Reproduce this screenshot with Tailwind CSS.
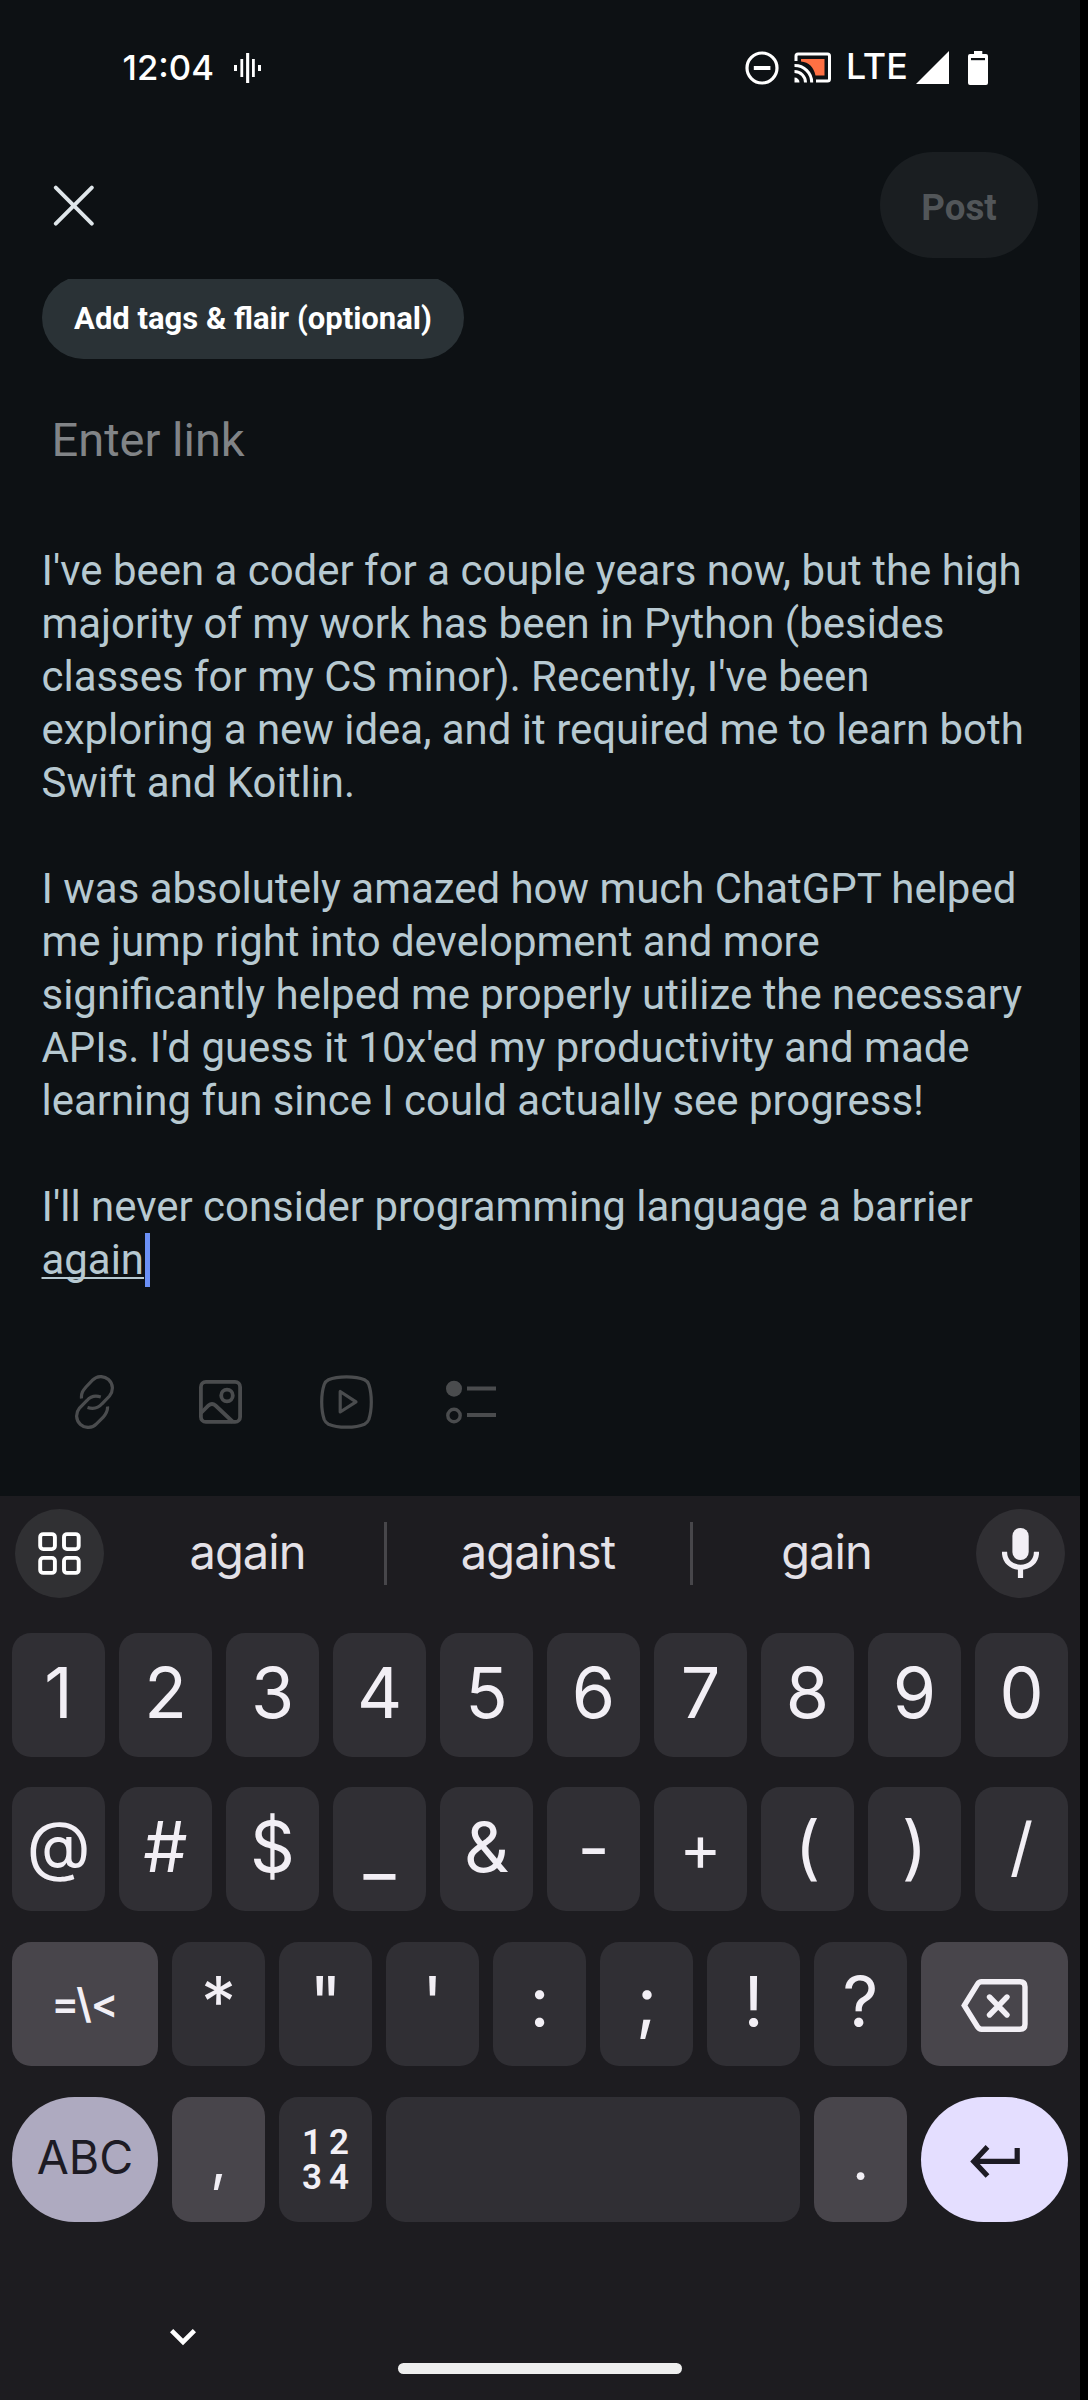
<!DOCTYPE html>
<html lang="en">
<head>
<meta charset="utf-8">
<title>Create post</title>
<script src="https://cdn.jsdelivr.net/npm/@tailwindcss/browser@4"></script>
</head>
<body class="bg-black">
<main class="flex h-[2400px] w-[1080px] flex-col bg-[#0d1114] font-[Roboto,sans-serif]">

  <!-- Composer -->
  <section class="flex h-[1496px] flex-col">
    <div class="flex h-[135px] shrink-0 items-center pl-[122.5px] pr-[92px] text-white">
      <span class="w-[111px] font-[Inter,sans-serif] text-[34.7px] font-medium">12:04</span>
      <svg class="h-[30px] w-[27px]" viewBox="0 0 27 30" fill="currentColor"><path d="M0 12h3v6H0zM6.4 6h2.8v18H6.4zM12.1 0h3.1v30h-3.1zM18 6h2.8v18H18zM24 12h3v6h-3z"/></svg>
      <svg class="ml-auto h-[34px] w-[34px]" viewBox="0 0 34 34" fill="none" stroke="currentColor"><circle cx="17" cy="17" r="15" stroke-width="3.2"/><path d="M8.8 17h16.6" stroke-width="4"/></svg>
      <svg class="ml-[15px] h-[31px] w-[38px]" viewBox="0 0 38 31" fill="none" stroke="currentColor" stroke-width="3"><path d="M7 7H30.5V23.5H21.5C19.5 14.5 15 10.5 7 9.5Z" fill="#ff7043" stroke="none"/><path d="M2 9V4Q2 2 4 2H33.5Q35.500 2 35.500 4V27Q35.500 29 33.500 29H22"/><path d="M.5 13.500A17 17 0 0 1 17.700 30.500M.5 19.500A11 11 0 0 1 11.500 30.500"/><path d="M.5 25.500a5 5 0 0 1 5 5h-5z" fill="currentColor" stroke="none"/></svg>
      <span class="ml-[14px] w-[60px] pb-[1.500px] font-[Inter,sans-serif] text-[35.800px] font-medium">LTE</span>
      <svg class="ml-[10px] h-[33px] w-[33px]" viewBox="0 0 33 33" fill="currentColor"><path d="M0 33 33 0V33z"/></svg>
      <svg class="ml-[19px] h-[34px] w-5" viewBox="0 0 20 34"><path d="M6 0h8.300v3H18q2 0 2 2v27q0 2-2 2H2q-2 0-2-2V5q0-2 2-2h4z" fill="currentColor"/><path d="M3 7h14v2.200H3z" fill="#0d1114"/></svg>
    </div>

    <header class="flex h-[140px] shrink-0 items-center justify-between pl-[53px] pr-[42px]">
      <svg class="h-[42px] w-[42px]" viewBox="0 0 42 42" fill="none" stroke="#dfe6ea" stroke-width="3.900" stroke-linecap="round"><path d="M2.800 3.600 38.800 39.600M38.800 3.600 2.800 39.600"/></svg>
      <button class="flex h-[106px] w-[158px] items-center justify-center rounded-full bg-[#1a1e21] pt-[5px] text-[36.7px] font-bold text-[#525659]">Post</button>
    </header>

    <div class="ml-[42px] mt-1 h-20 w-[422px] shrink-0 overflow-hidden">
      <button class="-mt-[3px] flex h-[83px] w-full items-center justify-center rounded-full bg-[#2a3236] pt-[4px] text-[31px] font-bold text-white">Add tags &amp; flair (optional)</button>
    </div>

    <div class="ml-[51.500px] mt-[51px] h-[60px] shrink-0 text-[47px] leading-[60px] text-[#818487]">Enter link</div>

    <div class="ml-[41.500px] mt-[73.500px] shrink-0 whitespace-nowrap text-[41.940px] leading-[53.050px] text-[#b7c9d1]">
      <p>I've been a coder for a couple years now, but the high<br>majority of my work has been in Python (besides<br>classes for my CS minor). Recently, I've been<br>exploring a new idea, and it required me to learn both<br>Swift and Koitlin.</p>
      <p class="mt-[53.050px]">I was absolutely amazed how much ChatGPT helped<br>me jump right into development and more<br>significantly helped me properly utilize the necessary<br>APIs. I'd guess it 10x'ed my productivity and made<br>learning fun since I could actually see progress!</p>
      <p class="mt-[53.050px]">I'll never consider programming language a barrier<br><span class="inline-flex h-[53px] items-start"><span class="underline decoration-2 underline-offset-[3px] [text-decoration-skip-ink:none]">again</span><span class="ml-[1px] h-[54px] w-[5px] bg-[#6b90f5]"></span></span></p>
    </div>

    <div class="mt-auto flex h-[189px] shrink-0 items-center pl-[74px]">
      <svg class="h-[54px] w-[41px]" viewBox="0 0 41 54" fill="none" stroke="#4a4c4e" stroke-width="3.200"><path d="M7.500 23.500C7 18 9 15.500 12 12L18.500 5.200C23 .5 30 .5 34.500 4.500C39.500 9 39.500 16 35.500 21L28 28.800C24 33.500 18.500 34 13.500 32.500"/><path d="M33.500 31.500C34 36 32 39 29 42.500L22.500 48.800C18 53.500 11 53.500 6.500 49.500C1.500 45 1.500 38 5.500 33L13 25.500C17 20.800 22 20.500 26.800 22"/></svg>
      <svg class="ml-[84px] h-[44px] w-[43px]" viewBox="0 0 43 44" fill="none" stroke="#4a4c4e" stroke-width="3.800"><rect x="1.900" y="1.900" width="39.200" height="40" rx="5"/><circle cx="28" cy="15.500" r="5.800"/><path d="M2 33 9.500 25.500Q13 22.500 16.500 25.500L34 42"/></svg>
      <svg class="ml-[78px] h-[54px] w-[53px]" viewBox="0 0 53 54" fill="none" stroke="#4a4c4e" stroke-width="3.200" stroke-linejoin="round"><path d="M26.500 1.800C34 1.800 40 2.800 44.500 4.800Q47.500 6.300 48.800 9.500C50.500 14.500 51.300 20 51.300 27S50.500 39.500 48.800 44.500Q47.500 47.700 44.500 49.200C40 51.200 34 52.200 26.500 52.200S13 51.200 8.500 49.200Q5.500 47.700 4.200 44.500C2.500 39.500 1.700 34 1.700 27S2.500 14.500 4.200 9.500Q5.500 6.300 8.500 4.800C13 2.800 19 1.800 26.500 1.800Z"/><path d="M20.200 16.500V37L36 26.800Z"/></svg>
      <svg class="ml-[73px] h-[44px] w-[50px]" viewBox="0 0 50 44" fill="none" stroke="#4a4c4e" stroke-width="3.400"><circle cx="8" cy="8.700" r="8" fill="#4a4c4e" stroke="none"/><circle cx="8" cy="35.500" r="6.200"/><path d="M21 8.500H50M21 35H50" stroke-width="4"/></svg>
    </div>
  </section>

  <!-- Keyboard -->
  <section class="flex h-[904px] flex-col bg-[#1d1c20] font-[Inter,sans-serif] text-[#f2eff5]">
    <div class="flex h-[115px] shrink-0 items-center px-[15px] text-[47px] tracking-[-0.02em] text-[#e4e1e7]">
      <button class="flex h-[89px] w-[89px] items-center justify-center rounded-full bg-[#303033]">
        <svg class="h-[43px] w-[43px]" viewBox="0 0 43 43" fill="none" stroke="#fff" stroke-width="3.900"><rect x="2.200" y="2.100" width="14.700" height="15" rx="3"/><rect x="26" y="2.100" width="14.700" height="15" rx="3"/><rect x="2.200" y="25.900" width="14.700" height="15" rx="3"/><rect x="26" y="25.900" width="14.700" height="15" rx="3"/></svg>
      </button>
      <span class="ml-[7px] w-[273px] pb-[2px] text-center">again</span>
      <span class="h-[63px] w-[3px] bg-[#47464a]"></span>
      <span class="w-[303px] pb-[2px] pr-[1px] text-center">against</span>
      <span class="h-[63px] w-[3px] bg-[#47464a]"></span>
      <span class="w-[267px] pb-[2px] text-center">gain</span>
      <button class="ml-auto flex h-[89px] w-[89px] items-center justify-center rounded-full bg-[#302f33]">
        <svg class="mb-[2px] h-[50px] w-[37px]" viewBox="0 0 37 50"><rect x="10.400" width="16.300" height="32" rx="8.100" fill="#f2eff5"/><path d="M2.500 23.700C2.500 33.500 9.500 39.300 18.500 39.300S34.500 33.500 34.500 23.700M18.500 39V50" fill="none" stroke="#f2eff5" stroke-width="5.200"/></svg>
      </button>
    </div>

    <div class="mt-[22px] flex flex-col gap-[30.700px] pl-3 pr-3 text-[70px] leading-none">
      <div class="grid h-[123.500px] grid-cols-10 gap-[14px] text-center">
        <span class="rounded-[19px] bg-[#302f34] pt-[25px]">1</span>
        <span class="rounded-[19px] bg-[#302f34] pt-[25px]">2</span>
        <span class="rounded-[19px] bg-[#302f34] pt-[25px]">3</span>
        <span class="rounded-[19px] bg-[#302f34] pt-[25px]">4</span>
        <span class="rounded-[19px] bg-[#302f34] pt-[25px]">5</span>
        <span class="rounded-[19px] bg-[#302f34] pt-[25px]">6</span>
        <span class="rounded-[19px] bg-[#302f34] pt-[25px]">7</span>
        <span class="rounded-[19px] bg-[#302f34] pt-[25px]">8</span>
        <span class="rounded-[19px] bg-[#302f34] pt-[25px]">9</span>
        <span class="rounded-[19px] bg-[#302f34] pt-[25px]">0</span>
      </div>
      <div class="grid h-[124px] grid-cols-10 gap-[14px] text-center">
        <span class="rounded-[19px] bg-[#302f34] pt-[25px] text-[66px]">@</span>
        <span class="rounded-[19px] bg-[#302f34] pt-[25px]">#</span>
        <span class="rounded-[19px] bg-[#302f34] pt-[25px]">$</span>
        <span class="rounded-[19px] bg-[#302f34] pt-[27px]">_</span>
        <span class="rounded-[19px] bg-[#302f34] pt-[25px]">&amp;</span>
        <span class="rounded-[19px] bg-[#302f34] pt-[26px]">-</span>
        <span class="rounded-[19px] bg-[#302f34] pt-[29px] text-[64px]">+</span>
        <span class="rounded-[19px] bg-[#302f34] pt-[25px]">(</span>
        <span class="rounded-[19px] bg-[#302f34] pt-[25px]">)</span>
        <span class="rounded-[19px] bg-[#302f34] pt-[27px] text-[65px]">/</span>
      </div>
      <div class="flex h-[124px] gap-[14px] text-center">
        <span class="flex w-[146px] items-center justify-center rounded-[19px] bg-[#48454b] text-[41px] font-semibold">=\&lt;</span>
        <span class="w-[93px] rounded-[19px] bg-[#302f34] pt-[25px]">*</span>
        <span class="w-[93px] rounded-[19px] bg-[#302f34] pt-[25px]">"</span>
        <span class="w-[93px] rounded-[19px] bg-[#302f34] pt-[25px]">'</span>
        <span class="w-[93px] rounded-[19px] bg-[#302f34] pt-[25px]">:</span>
        <span class="w-[93px] rounded-[19px] bg-[#302f34] pt-[25px]">;</span>
        <span class="w-[93px] rounded-[19px] bg-[#302f34] pt-[25px]">!</span>
        <span class="w-[93px] rounded-[19px] bg-[#302f34] pt-[25px]">?</span>
        <span class="flex w-[147px] items-center justify-center rounded-[19px] bg-[#48454b] pt-[4px]">
          <svg class="h-[53px] w-[67px]" viewBox="0 0 67 53" fill="none" stroke="#f2eff5" stroke-width="5.400" stroke-linejoin="round"><path d="M3.300 26.500 16.500 5.200Q18 2.800 20.500 2.800H59Q64 2.800 64 7.800V45.200Q64 50.200 59 50.200H20.500Q18 50.200 16.500 47.800Z" stroke-linejoin="miter"/><path d="M28.500 18 46 36M46 18 28.500 36" stroke-linecap="round"/></svg>
        </span>
      </div>
      <div class="flex h-[125px] gap-[14px] text-center">
        <span class="flex w-[146px] items-center justify-center rounded-full bg-[#aeaac0] pb-[4px] text-[46.500px] text-[#1d1b24]">ABC</span>
        <span class="w-[93px] rounded-[19px] bg-[#48454b] pt-[33px] text-[58px]">,</span>
        <span class="flex w-[93px] items-center justify-center rounded-[19px] bg-[#302f34] pt-[2px]">
          <span class="grid grid-cols-[27px_27px] font-[Roboto,sans-serif] text-[35px] font-semibold leading-[35px]"><span>1</span><span>2</span><span>3</span><span>4</span></span>
        </span>
        <span class="w-[414px] rounded-[19px] bg-[#302f34]"></span>
        <span class="w-[93px] rounded-[19px] bg-[#48454b] pt-[33px] text-[58px]">.</span>
        <span class="flex w-[147px] items-center justify-center rounded-full bg-[#e4deff] pt-[5px]">
          <svg class="h-[33px] w-[50px]" viewBox="0 0 50 33" fill="none" stroke="#1d1b24" stroke-width="5.200"><path d="M47.200 3V16.300H4M17.500 1.900 3.800 16.400 17.500 31"/></svg>
        </span>
      </div>
    </div>

    <div class="mt-auto flex h-[78px] shrink-0 items-start pl-[170px]">
      <svg class="mt-[7px] h-[17px] w-[26px]" viewBox="0 0 26 17" fill="none" stroke="#fff" stroke-width="4.600"><path d="M1.600 1.600 13 13 24.400 1.600"/></svg>
      <span class="ml-[202px] mt-[41px] h-[11px] w-[284px] rounded-full bg-[#eeeeee]"></span>
    </div>
  </section>
</main>
</body>
</html>
